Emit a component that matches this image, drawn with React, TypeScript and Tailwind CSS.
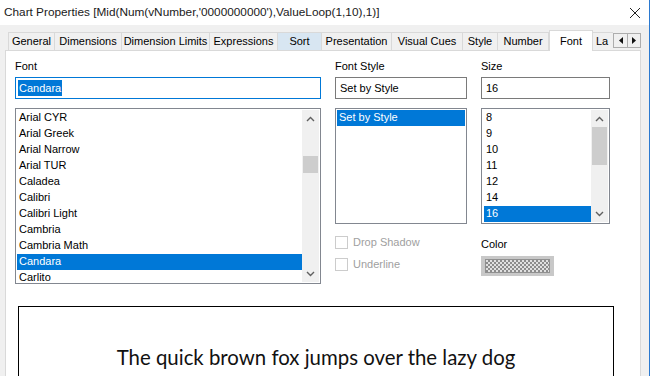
import React from "react";

const ui = { fontFamily: '"Liberation Sans", Arial, sans-serif' };

const tabs = [
  { label: "General", w: "w-[47px]" },
  { label: "Dimensions", w: "w-[67px]" },
  { label: "Dimension Limits", w: "w-[88px]" },
  { label: "Expressions", w: "w-[68px]" },
  { label: "Sort", w: "w-[44px]", hover: true },
  { label: "Presentation", w: "w-[70px]" },
  { label: "Visual Cues", w: "w-[71px]" },
  { label: "Style", w: "w-[35px]" },
  { label: "Number", w: "w-[51px]" },
];

const fonts = [
  "Arial CYR",
  "Arial Greek",
  "Arial Narrow",
  "Arial TUR",
  "Caladea",
  "Calibri",
  "Calibri Light",
  "Cambria",
  "Cambria Math",
  "Candara",
  "Carlito",
];

const sizes = ["8", "9", "10", "11", "12", "14", "16"];

function Chevron({ up }: { up?: boolean }) {
  return (
    <svg width="9" height="6" viewBox="0 0 9 6">
      <polyline
        points={up ? "1,5 4.5,1.5 8,5" : "1,1 4.5,4.5 8,1"}
        fill="none"
        stroke="#606060"
        strokeWidth="1.4"
      />
    </svg>
  );
}

function ScrollBar({ thumbTop, thumbH }: { thumbTop: string; thumbH: string }) {
  return (
    <div className="flex w-[17px] shrink-0 flex-col bg-[#f0f0f0]">
      <div className="flex h-[17px] items-center justify-center">
        <Chevron up />
      </div>
      <div className="flex-1">
        <div className={`${thumbTop} ${thumbH} mx-[1px] bg-[#cdcdcd]`} />
      </div>
      <div className="flex h-[17px] items-center justify-center">
        <Chevron />
      </div>
    </div>
  );
}

function ListItem({ text, selected }: { text: string; selected?: boolean }) {
  return (
    <div
      className={`flex h-[16px] shrink-0 items-center pb-[2px] pl-[2px] leading-[13px] ${
        selected ? "bg-[#0078d7] text-white" : "text-black"
      }`}
    >
      {text}
    </div>
  );
}

function Checkbox({ label }: { label: string }) {
  return (
    <div className="flex h-[22px] items-center gap-[5px]">
      <div className="size-[13px] border border-[#cccccc] bg-white" />
      <span className="text-[#a0a0a0]">{label}</span>
    </div>
  );
}

export default function App() {
  return (
    <div
      className="relative flex h-[376px] w-[650px] flex-col overflow-hidden border-r border-[#2b79d0] bg-[#f0f0f0] text-[11px] text-black"
      style={ui}
    >
      {/* Title bar */}
      <div className="flex h-[25px] shrink-0 items-center justify-between bg-white pl-[4px] pr-[8px]">
        <span className="text-[11.8px] text-[#1a1a1a]">
          Chart Properties [Mid(Num(vNumber,'0000000000'),ValueLoop(1,10),1)]
        </span>
        <svg width="12" height="12" viewBox="0 0 12 12">
          <path d="M1 1 L11 11 M11 1 L1 11" stroke="#222" strokeWidth="1" />
        </svg>
      </div>

      {/* Tabs */}
      <div className="flex h-[25px] shrink-0 items-end whitespace-nowrap pl-[8px]">
        {tabs.map((t) => (
          <div
            key={t.label}
            className={`flex h-[18px] ${t.w} items-center justify-center border border-b-0 border-l-0 first:border-l ${
              t.hover
                ? "border-[#d9d9d9] bg-[#d8e6f2]"
                : "border-[#d9d9d9] bg-[#f0f0f0]"
            }`}
          >
            {t.label}
          </div>
        ))}
        <div className="relative z-10 -mb-[1px] flex h-[21px] w-[44px] items-start justify-center border border-b-0 border-[#d9d9d9] bg-white pt-[2px]">
          Font
        </div>
        <div className="flex h-[18px] w-[20px] items-center overflow-hidden border-t border-[#d9d9d9] pl-[3px]">
          La
        </div>
        <div className="mb-[2px] flex h-[15px] self-end">
          {["M5 1 L1 4.5 L5 8 Z", "M1 1 L5 4.5 L1 8 Z"].map((d) => (
            <div
              key={d}
              className="flex w-[14px] items-center justify-center border border-[#adadad] bg-[#f0f0f0] first:border-r-0"
            >
              <svg width="6" height="9" viewBox="0 0 6 9">
                <path d={d} fill="#111" />
              </svg>
            </div>
          ))}
        </div>
      </div>

      {/* Panel */}
      <div className="ml-[5px] flex w-[636px] flex-1 flex-col border border-[#d9d9d9] bg-white pl-[9px] pt-[9px]">
        <div className="flex gap-[14px]">
          {/* Font column */}
          <div className="flex w-[306px] flex-col">
            <div className="h-[17px] leading-[13px]">Font</div>
            <div className="flex h-[22px] items-center border border-[#0078d7] pl-[2px]">
              <span className="bg-[#0078d7] px-[1px] text-white">Candara</span>
            </div>
            <div className="mt-[9px] flex h-[176px] border border-[#828790] p-[1px]">
              <div className="flex flex-1 flex-col overflow-hidden">
                {fonts.map((f) => (
                  <ListItem key={f} text={f} selected={f === "Candara"} />
                ))}
              </div>
              <ScrollBar thumbTop="mt-[29px]" thumbH="h-[17px]" />
            </div>
          </div>

          {/* Font style column */}
          <div className="flex w-[132px] flex-col">
            <div className="h-[17px] leading-[13px]">Font Style</div>
            <div className="flex h-[22px] items-center border border-[#7a7a7a] pl-[4px]">
              Set by Style
            </div>
            <div className="mt-[9px] h-[116px] border border-[#828790] p-[1px]">
              <ListItem text="Set by Style" selected />
            </div>
            <div className="mt-[7px] flex flex-col">
              <Checkbox label="Drop Shadow" />
              <Checkbox label="Underline" />
            </div>
          </div>

          {/* Size column */}
          <div className="flex w-[129px] flex-col">
            <div className="h-[17px] leading-[13px]">Size</div>
            <div className="flex h-[22px] items-center border border-[#7a7a7a] pl-[4px]">
              16
            </div>
            <div className="mt-[9px] flex h-[116px] border border-[#828790] p-[1px]">
              <div className="flex flex-1 flex-col overflow-hidden pl-[1px]">
                {sizes.map((s) => (
                  <ListItem key={s} text={s} selected={s === "16"} />
                ))}
              </div>
              <ScrollBar thumbTop="mt-0" thumbH="h-[38px]" />
            </div>
            <div className="mt-[12px] h-[15px]">Color</div>
            <div className="mt-[5px] flex h-[20px] w-[73px] items-center justify-center bg-[#c8c8c8]">
              <div className="h-[14px] w-[65px] border border-[#909090] bg-[repeating-conic-gradient(#8c8c8c_0%_25%,#e0e0e0_0%_50%)] bg-[length:4px_4px]" />
            </div>
          </div>
        </div>

        {/* Preview */}
        <div className="ml-[3px] mt-[22px] flex h-[90px] w-[596px] justify-center border border-black pt-[35px]">
          <span
            className="text-[20.4px] text-[#111]"
            style={{ fontFamily: "Lato, 'Open Sans', sans-serif" }}
          >
            The quick brown fox jumps over the lazy dog
          </span>
        </div>
      </div>
    </div>
  );
}
